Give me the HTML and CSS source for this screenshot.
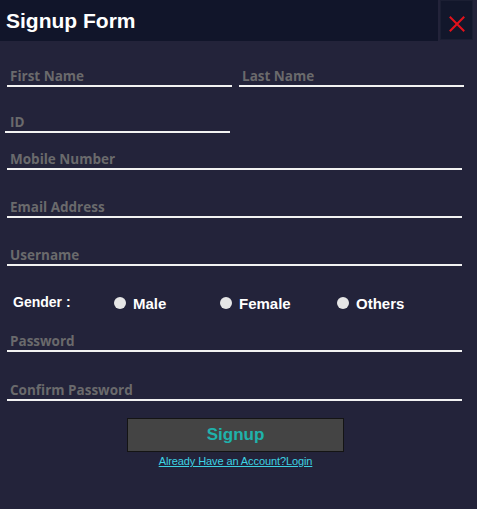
FILE: index.html
```html
<!DOCTYPE html>
<html lang="en">
<head>
<meta charset="utf-8">
<title>Signup Form</title>
<link rel="stylesheet" href="styles.css">
</head>
<body>
<div class="window">
  <header class="titlebar">
    <div class="titlebar-main"><h1 class="title">Signup Form</h1></div>
    <button class="close" type="button" aria-label="Close">
      <svg width="16" height="16" viewBox="0 0 16 16"><path d="M1.5 1.5 L14.5 14.5 M14.5 1.5 L1.5 14.5" stroke="#e3121b" stroke-width="2" stroke-linecap="square" fill="none"/></svg>
    </button>
  </header>
  <form class="form">
    <div class="row-names">
      <input class="field" type="text" placeholder="First Name">
      <input class="field" type="text" placeholder="Last Name">
    </div>
    <input class="field field-id" type="text" placeholder="ID">
    <input class="field field-wide field-mobile" type="text" placeholder="Mobile Number">
    <input class="field field-wide field-gap" type="text" placeholder="Email Address">
    <input class="field field-wide field-gap" type="text" placeholder="Username">
    <div class="gender">
      <span class="gender-label">Gender :</span>
      <label class="option option-male"><input type="radio" name="g" class="radio">Male</label>
      <label class="option option-female"><input type="radio" name="g" class="radio">Female</label>
      <label class="option"><input type="radio" name="g" class="radio">Others</label>
    </div>
    <input class="field field-wide" type="password" placeholder="Password">
    <input class="field field-wide field-confirm" type="password" placeholder="Confirm Password">
    <div class="actions">
      <button class="signup" type="button">Signup</button>
      <a class="login" href="#">Already Have an Account?Login</a>
    </div>
  </form>
</div>
</body>
</html>
```
FILE: styles.css
```css
* { box-sizing: border-box; }
html, body {
  margin: 0;
  padding: 0;
  background: #23233a;
  height: 100%;
}
.window {
  width: 477px;
  height: 509px;
  background: #23233a;
  font-family: "Liberation Sans", Arial, sans-serif;
}
.titlebar {
  display: flex;
  height: 41px;
}
.titlebar-main {
  width: 438px;
  height: 41px;
  background: #11152a;
  display: flex;
  align-items: center;
  padding-left: 6px;
}
.title {
  margin: 0;
  color: #ffffff;
  font-size: 21px;
  font-weight: bold;
  font-family: "Liberation Sans", Arial, sans-serif;
}
.close {
  margin-left: 2px;
  width: 33px;
  height: 40px;
  background: #12172b;
  border: 1px solid #1b1f33;
  padding: 8px 0 0 0;
  display: flex;
  justify-content: center;
  align-items: center;
  cursor: pointer;
}
.close svg { display: block; }
.form {
  display: flex;
  flex-direction: column;
  align-items: flex-start;
  padding-left: 7px;
}
.row-names {
  display: grid;
  grid-template-columns: 225px 225px;
  column-gap: 7px;
  margin-top: 22px;
}
.field {
  display: block;
  height: 24px;
  width: 225px;
  margin: 0;
  padding: 3px 3px 0 3px;
  background: transparent;
  border: none;
  border-bottom: 2px solid #f2f2f2;
  outline: none;
  color: #ffffff;
  font-family: "Open Sans", "Liberation Sans", sans-serif;
  font-weight: 700;
  font-size: 13.5px;
}
.field::placeholder { color: #6a6a6c; }
.field-id {
  margin-top: 22px;
  margin-left: -2px;
  padding-left: 5px;
}
.field-wide { width: 455px; }
.field-mobile { margin-top: 13px; }
.field-gap { margin-top: 24px; }
.field-confirm { margin-top: 25px; }
.gender {
  display: flex;
  align-items: center;
  height: 20px;
  margin-top: 27px;
  margin-bottom: 15px;
  color: #ffffff;
  font-weight: bold;
}
.gender-label {
  width: 107px;
  padding-left: 6px;
  font-size: 14px;
  margin-bottom: 3px;
}
.option {
  display: flex;
  align-items: center;
  font-size: 15px;
}
.option-male { width: 106px; }
.option-female { width: 117px; }
.radio {
  appearance: none;
  -webkit-appearance: none;
  width: 12px;
  height: 12px;
  margin: 0 7px 0 0;
  border-radius: 50%;
  background: #e6e6e6;
  border: none;
}
.actions {
  display: flex;
  flex-direction: column;
  align-items: center;
  width: 217px;
  margin-left: 120px;
  margin-top: 17px;
}
.signup {
  width: 217px;
  height: 34px;
  background: #444444;
  border: 1px solid #141414;
  color: #1fb2ab;
  font-family: "Liberation Sans", Arial, sans-serif;
  font-weight: bold;
  font-size: 17px;
  padding: 0;
  cursor: pointer;
}
.login {
  margin-top: 3px;
  color: #3dd2e2;
  font-size: 11px;
  letter-spacing: -0.1px;
  text-decoration: underline;
  font-family: "Liberation Sans", Arial, sans-serif;
}
```
